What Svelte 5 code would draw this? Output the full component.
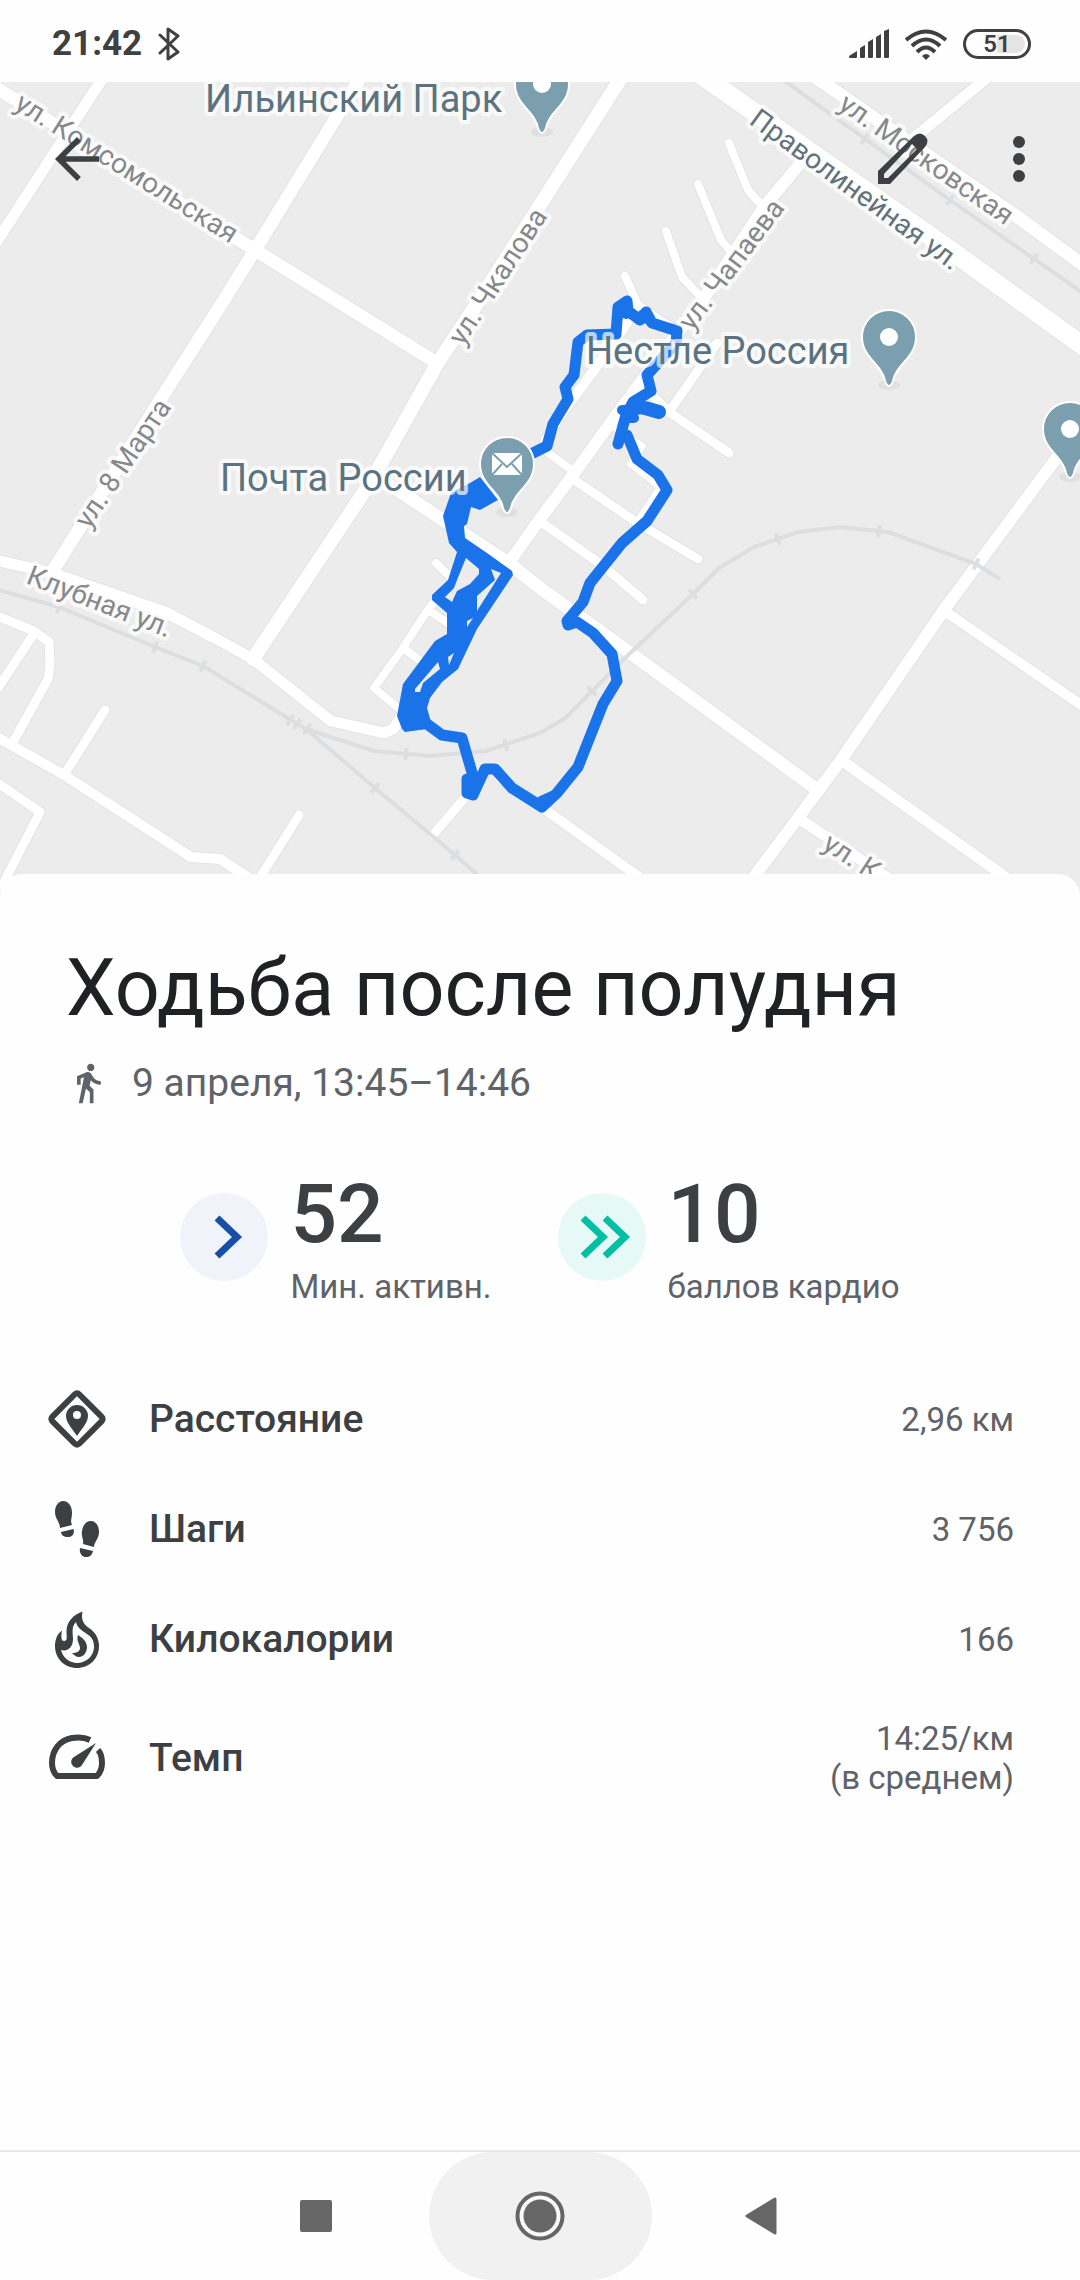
<script>
  const roads = [
    { w: 13, d: 'M-5 87 255 250 437 363' },
    { w: 11, d: 'M106 73 -6 246' },
    { w: 13, d: 'M364 72 255 250 224 300 162 397 52 572' },
    { w: 14, d: 'M625 72 540 205 482 296 437 364 372 480 253 659' },
    { w: 19, d: 'M697 72 805 148 953 252 1090 351' },
    { w: 13, d: 'M808 72 919 149 1012 213 1090 270' },
    { w: 11, d: 'M994 72 914 138' },
    { w: 12, d: 'M803 160 764 207 702 301 643 379 614 418 573 475 540 519 508 564' },
    { w: 8, d: 'M729 143 748 190 766 210' },
    { w: 8, d: 'M698 184 721 240 733 254' },
    { w: 8, d: 'M666 231 682 277 702 298' },
    { w: 8, d: 'M625 276 638 305 680 333' },
    { w: 10, d: 'M638 306 609 350 560 416 545 442' },
    { w: 8, d: 'M547 452 573 471' },
    { w: 9, d: 'M573 479 636 522 698 559' },
    { w: 9, d: 'M541 522 602 565 643 600' },
    { w: 9, d: 'M645 388 669 412 729 453' },
    { w: 9, d: 'M717 343 669 412' },
    { w: 6, d: 'M614 428 643 446 630 464 660 487 638 520' },
    { w: 13, d: 'M378 479 396 489 510 564 540 588 633 655 815 788' },
    { w: 8, d: 'M436 563 452 579' },
    { w: 8, d: 'M440 594 427 611 403 648 374 688 402 711' },
    { w: 8, d: 'M430 611 452 626' },
    { w: 8, d: 'M403 648 422 662' },
    { w: 11, d: 'M-5 560 52 573 165 612 213 637 253 659 293 691 331 721 384 733 393 729 405 712' },
    { w: 9, d: 'M-5 615 34 631 49 642 50 664 48 679 12 744' },
    { w: 9, d: 'M33 635 -6 694' },
    { w: 10, d: 'M-5 736 64 775 191 857 220 859 252 880' },
    { w: 9, d: 'M105 710 64 775' },
    { w: 9, d: 'M-5 781 40 812 2 886' },
    { w: 9, d: 'M299 815 255 886' },
    { w: 9, d: 'M468 794 433 835' },
    { w: 12, d: 'M1061 452 946 607 841 760 798 818 750 882' },
    { w: 10, d: 'M946 612 1090 711' },
    { w: 11, d: 'M841 760 1018 886' },
    { w: 11, d: 'M798 818 900 886' },
    { w: 10, d: 'M500 778 543 808 650 885' }
  ];

  const rails = [
    'M775 74 950 200 1090 298',
    'M-5 589 59 607 155 647 203 666 291 720 306 729 375 788 455 855 495 890',
    'M306 729 374 751 430 756 486 751 540 733 564 719 592 691 624 659 693 594 719 568 754 547 798 532 840 527 888 532 976 564 1000 579'
  ];

  const ties = [
    [865, 139, 36], [950, 200, 36], [1034, 259, 36], [59, 607, 20], [155, 647, 22], [203, 666, 25],
    [290, 720, 32], [297, 724, 32], [307, 729, 35], [375, 788, 40], [455, 855, 40], [406, 754, 5],
    [506, 745, -15], [592, 691, -44], [693, 594, -43], [778, 539, -20], [879, 531, 8], [976, 564, 25]
  ];

  const streets = [
    { x: 13, y: 108, r: 32, t: 'ул. Комсомольская' },
    { x: 463, y: 347, r: -57, t: 'ул. Чкалова' },
    { x: 692, y: 332, r: -53, t: 'ул. Чапаева' },
    { x: 89, y: 530, r: -56, t: 'ул. 8 Марта' },
    { x: 25, y: 583, r: 21, t: 'Клубная ул.' },
    { x: 748, y: 123, r: 36, t: 'Праволинейная ул.', major: true },
    { x: 837, y: 108, r: 35, t: 'ул. Московская' },
    { x: 821, y: 848, r: 33, t: 'ул. К' }
  ];

  const places = [
    { x: 205, y: 112, t: 'Ильинский Парк' },
    { x: 220, y: 491, t: 'Почта России' },
    { x: 586, y: 364, t: 'Нестле Россия' }
  ];

  const pins = [
    { x: 542, y: 84 },
    { x: 889, y: 337 },
    { x: 1070, y: 429 },
    { x: 507, y: 464, mail: true }
  ];

  const metrics = [
    { icon: 'distance', name: 'Расстояние', lines: ['2,96 км'] },
    { icon: 'steps', name: 'Шаги', lines: ['3 756'] },
    { icon: 'energy', name: 'Килокалории', lines: ['166'] },
    { icon: 'pace', name: 'Темп', lines: ['14:25/км', '(в среднем)'] }
  ];
</script>

<div class="screen">
  <header class="status">
    <div class="group left">
      <time>21:42</time>
      <svg width="22" height="36" viewBox="0 0 22 36" aria-label="Bluetooth">
        <path d="M2 9 20 26 10 33V3L20 10 2 27" fill="none" stroke="#404040" stroke-width="3" stroke-linejoin="round" stroke-linecap="round" />
      </svg>
    </div>
    <div class="group right">
      <svg width="40" height="30" viewBox="0 0 40 30" fill="#404040" aria-label="Сигнал">
        <path d="M0 27 8 22V28Q8 29 7 29H1Q0 29 0 27zM11 19l5-3v12q0 1-1 1h-3q-1 0-1-1zM19 13l5-3v18q0 1-1 1h-3q-1 0-1-1zM27 8l5-3v23q0 1-1 1h-3q-1 0-1-1zM35 2l5-2v28q0 1-1 1h-3q-1 0-1-1z" />
      </svg>
      <svg width="42" height="31" viewBox="0 0 42 31" fill="none" stroke="#404040" stroke-width="4" aria-label="Wi-Fi">
        <path d="M1 11Q21-6 41 11M7 17Q21 4 35 17M12 23Q21 14 30 23" />
        <path d="M21 31 17 27Q21 23 25 27z" fill="#404040" stroke="none" />
      </svg>
      <span class="battery">51</span>
    </div>
  </header>

  <section class="map">
    <svg class="canvas" viewBox="0 82 1080 814" role="img" aria-label="Маршрут на карте">
      <rect x="0" y="82" width="1080" height="814" fill="#ececec" />
      <g class="edges">
        {#each roads as road}<path d={road.d} stroke-width={road.w + 2} />{/each}
      </g>
      <g class="roads">
        {#each roads as road}<path d={road.d} stroke-width={road.w} />{/each}
      </g>
      <g class="rails">
        {#each rails as d}<path {d} />{/each}
        {#each ties as [x, y, r]}<path d="M0-6V6" transform="translate({x} {y}) rotate({r})" />{/each}
      </g>

      <g class="labels street">
        {#each streets as s}
          <text class:major={s.major} transform="translate({s.x} {s.y}) rotate({s.r})">{s.t}</text>
        {/each}
      </g>

      <g class="route">
        <path stroke-width="11" d="M507 468 533 453 547 446 553 424 568 399 565 387 574 375 578 342 587 335 616 334 618 307 627 301 628 311 640 320 646 312 652 323 677 331 676 343 647 375 651 391 633 402 626 415 618 444M627 435 637 459 658 475 667 490 647 521 622 543 590 583 583 602 567 621 568 625 577 622 593 633 612 654 617 681 603 704 578 767 557 793 542 807 512 788 495 769 485 769 473 795 467 793 467 779 475 783 462 738 442 735 427 724" />
        <path stroke-width="10" d="M640 408 660 413M622 410 650 409M626 418 634 418M620 309 626 314M642 315 647 319M541 801 552 796" />
        <path stroke-width="14" d="M630 411 640 406M645 408 659 412" />
        <path class="mass" fill-rule="evenodd" d="M458 489 470 483 480 477 498 500 489 505 480 510 471 507 467 524 464 526 465 538 487 553 512 571 513 575 477 629 458 669 442 682 430 698 427 708 431 722 427 729 405 732 402 729 397 716 403 684 435 641 447 634 447 613 432 600 432 595 448 580 457 552 449 543 443 516 451 493zM466 558 479 569 479 574 470 584 457 591 452 602 445 597 454 588 457 580zM491 569 501 573 477 611 477 596 495 580zM467 621 473 618 467 627zM448 657 454 653 449 665zM438 662 440 669 423 683 420 692 415 692 415 689z" />
      </g>

      <g class="labels place">
        {#each places as p}<text x={p.x} y={p.y}>{p.t}</text>{/each}
      </g>

      {#each pins as pin}
        <g transform="translate({pin.x} {pin.y})">
          <ellipse cx="0" cy="48" rx="11" ry="5" fill="#e0e0e0" />
          <path d="M0-27C-15-27-27-15-27 0-27 21-7 27-4 44Q0 54 4 44C7 27 27 21 27 0 27-15 15-27 0-27z" fill="#7b9faf" stroke="#fff" stroke-width="2" />
          {#if pin.mail}
            <rect x="-15" y="-11" width="30" height="22" fill="#fff" />
            <path d="M-15-11 0 3 15-11M-15 11-5 0M15 11 5 0" fill="none" stroke="#7b9faf" stroke-width="2" />
          {:else}
            <circle r="9" fill="#fff" />
          {/if}
        </g>
      {/each}
    </svg>

    <div class="toolbar">
      <button aria-label="Назад">
        <svg width="66" height="66" viewBox="0 0 24 24" fill="#3c4043"><path d="M20 11H7.830l5.590-5.590L12 4l-8 8 8 8 1.410-1.410L7.830 13H20v-2z" /></svg>
      </button>
      <span class="spacer"></span>
      <button aria-label="Изменить">
        <svg width="66" height="66" viewBox="0 0 66 66" fill="#3c4043">
          <path fill-rule="evenodd" d="M8 45 44 10Q50 5 55 10Q60 15 55 21L20 58H8zM14 48V52H18L47 23 42 18z" />
        </svg>
      </button>
      <button aria-label="Ещё">
        <svg width="66" height="66" viewBox="0 0 66 66" fill="#3c4043"><circle cx="33" cy="16" r="6" /><circle cx="33" cy="33" r="6" /><circle cx="33" cy="50" r="6" /></svg>
      </button>
    </div>
  </section>

  <main class="sheet">
    <h1>Ходьба после полудня</h1>
    <p class="when">
      <svg width="44" height="44" viewBox="0 0 24 24" fill="#5f6368" aria-hidden="true">
        <path d="M13.500 5.500c1.100 0 2-.9 2-2s-.9-2-2-2-2 .9-2 2 .9 2 2 2zM9.800 8.900L7 23h2.100l1.800-8 2.100 2v6h2v-7.500l-2.100-2 .6-3C14.800 12 16.800 13 19 13v-2c-1.900 0-3.500-1-4.300-2.400l-1-1.600c-.4-.6-1-1-1.700-1-.3 0-.5.1-.8.1L6 8.300V13h2V9.600l1.800-.7" />
      </svg>
      <span>9 апреля, 13:45–14:46</span>
    </p>

    <div class="stats">
      <div class="stat">
        <svg width="88" height="88" viewBox="0 0 88 88" aria-hidden="true">
          <circle cx="44" cy="44" r="44" fill="#f0f4fa" />
          <path d="M37 25 57 44 37 63" fill="none" stroke="#174ea6" stroke-width="7" />
        </svg>
        <div><strong>52</strong><span>Мин. активн.</span></div>
      </div>
      <div class="stat">
        <svg width="88" height="88" viewBox="0 0 88 88" aria-hidden="true">
          <circle cx="44" cy="44" r="44" fill="#e6f9f6" />
          <path d="M25 25 45 44 25 63M47 25 67 44 47 63" fill="none" stroke="#00bfa5" stroke-width="7" />
        </svg>
        <div><strong>10</strong><span>баллов кардио</span></div>
      </div>
    </div>

    <dl class="metrics">
      {#each metrics as m}
        <div class="row">
          <dt>
            <svg width="66" height="66" viewBox="0 0 66 66" fill="#3c4043" aria-hidden="true">
              {#if m.icon === 'distance'}
                <rect x="14" y="14" width="38" height="38" rx="3" fill="none" stroke="#3c4043" stroke-width="6" transform="rotate(45 33 33)" />
                <path fill-rule="evenodd" d="M33 50C30 45 22 37 22 30a11 11 0 0 1 22 0C44 37 36 45 33 50zM33 25a4 4 0 1 0 0 8a4 4 0 1 0 0-8z" />
              {:else if m.icon === 'steps'}
                <path d="M16 32C16 26 11 23 11 16 11 9 15 5 19 5 25 5 28 11 28 17 28 22 26 25 28 29zM17 36 29.500 33C31 38 28 41 24 41 20 41 17 39 17 36zM39 48C40 43 37 41 38 35 39 29 42 25 47 25 52 25 55 30 55 36 55 43 50 46 50 51zM36 52 49 55C48 59 46 61 42 61 38 61 35 57 36 52z" />
              {:else if m.icon === 'energy'}
                <path fill-rule="evenodd" d="M38.500 5.500C37 13 39 18 45 22 51 26 55 32 55 40 55 53 45 62 33 62 21 62 11 53 11 40 11 34 13 28 18 24.500 17 30 17 35 20 35 24 35 22.500 30 22.500 25 22.500 16 29 9 38.500 5.500zM32 16C27 21 29 27 29 33 29 41 24 46 17 44 19 52 26 57 33 57 42 57 50 50 50 41 50 35 48 31 43 28 37 24 33 21 32 16z" />
                <path d="M34 29C39 32 43 36 43 41 43 47 39 51 35 51 32 51 30 49 28 47 33 47 36 45 36 42 36 38 32 35 34 29z" />
              {:else}
                <path d="M46 15C40 12 34 12 28 13 16 15 8 25 8 38 8 43 10 48 13 51H53C56 48 58 43 58 38 58 33 57 28 54 25" fill="none" stroke="#3c4043" stroke-width="6" stroke-linejoin="round" />
                <path d="M52 18 38 40C36 43 32 44 29 41 26 38 27 34 30 32z" />
              {/if}
            </svg>
            {m.name}
          </dt>
          <dd>{#each m.lines as line}<span>{line}</span>{/each}</dd>
        </div>
      {/each}
    </dl>
  </main>

  <nav class="navbar">
    <button aria-label="Недавние"><svg width="50" height="50" viewBox="0 0 50 50" fill="#666"><rect x="8" y="9" width="32" height="32" rx="2" /></svg></button>
    <button class="pressed" aria-label="Домой">
      <svg width="50" height="50" viewBox="0 0 50 50"><circle cx="25" cy="25" r="22.500" fill="#f8f8f8" stroke="#666" stroke-width="4" /><circle cx="25" cy="25" r="16.500" fill="#666" /></svg>
    </button>
    <button aria-label="Назад"><svg width="50" height="50" viewBox="0 0 50 50" fill="#666" stroke="#666" stroke-width="3" stroke-linejoin="round"><path d="M9 25 37 8V42z" /></svg></button>
  </nav>
</div>

<style>
  :global(body) {
    margin: 0;
    background: #fefefe;
  }
  .screen {
    display: flex;
    flex-direction: column;
    min-height: 100vh;
    font-family: Roboto, 'Noto Sans', sans-serif;
    color: #3c4043;
    background: #fefefe;
  }
  svg {
    display: block;
    flex-shrink: 0;
  }
  button {
    display: flex;
    align-items: center;
    justify-content: center;
    padding: 0;
    border: 0;
    background: none;
  }
  .status {
    display: flex;
    justify-content: space-between;
    align-items: center;
    height: 82px;
    padding: 6px 49px 0 52px;
    box-sizing: border-box;
    color: #404040;
  }
  .group {
    display: flex;
    align-items: center;
    gap: 16px;
  }
  time {
    font-size: 35px;
    line-height: 44px;
    font-weight: 700;
  }
  .battery {
    box-sizing: border-box;
    width: 68px;
    height: 30px;
    border: 3px solid #404040;
    border-radius: 15px;
    padding: 3px;
    font-size: 24px;
    line-height: 18px;
    font-weight: 600;
    text-align: center;
    background: linear-gradient(90deg, #fefefe 50%, #e4e4e4 50%) content-box;
  }
  .map {
    position: relative;
    overflow: hidden;
  }
  .canvas {
    width: 100%;
    height: auto;
  }
  .edges path,
  .roads path,
  .rails path,
  .route path {
    fill: none;
    stroke-linejoin: round;
  }
  .edges path {
    stroke: #e2e3e5;
    stroke-linecap: round;
  }
  .roads path {
    stroke: #fff;
    stroke-linecap: round;
  }
  .rails path {
    stroke: #dcdee0;
    stroke-width: 4;
  }
  .route path {
    stroke: #1a73e8;
    stroke-linecap: round;
  }
  .route .mass {
    fill: #1a73e8;
    stroke: none;
  }
  .labels text {
    paint-order: stroke;
    stroke: #fff;
    stroke-opacity: 0.7;
    stroke-width: 8;
    stroke-linejoin: round;
  }
  .street text {
    font-size: 28px;
    fill: #85898c;
  }
  .street .major {
    fill: #64727a;
  }
  .place text {
    font-size: 38px;
    fill: #5b7380;
  }
  .toolbar {
    position: absolute;
    top: 44px;
    left: 44px;
    right: 28px;
    display: flex;
  }
  .toolbar button + button {
    margin-left: 50px;
  }
  .spacer {
    flex: 1;
  }
  .sheet {
    position: relative;
    flex: 1;
    margin-top: -22px;
    padding: 68px 66px 0;
    border-radius: 22px 22px 0 0;
    background: #fefefe;
  }
  h1 {
    margin: 0;
    font-size: 79px;
    line-height: 92px;
    font-weight: 400;
    color: #202124;
  }
  .when {
    display: flex;
    align-items: center;
    gap: 22px;
    margin: 26px 0 0;
    font-size: 39px;
    line-height: 46px;
    color: #5f6368;
  }
  .stats {
    display: flex;
    justify-content: center;
    gap: 66px;
    margin-top: 58px;
  }
  .stat {
    display: flex;
    align-items: center;
    gap: 22px;
  }
  .stat div {
    display: flex;
    flex-direction: column;
  }
  .stat strong {
    font-size: 82px;
    line-height: 100px;
    font-weight: 500;
  }
  .stat span {
    font-size: 33px;
    line-height: 46px;
    color: #5f6368;
  }
  .metrics {
    margin: 54px 0 0 -22px;
  }
  .row {
    display: flex;
    justify-content: space-between;
    align-items: center;
    min-height: 110px;
    box-sizing: border-box;
    padding: 25px 0;
  }
  dt {
    display: flex;
    align-items: center;
    gap: 39px;
    height: 60px;
    font-size: 39px;
    font-weight: 500;
  }
  dd {
    display: flex;
    flex-direction: column;
    align-items: flex-end;
    margin: 0;
    font-size: 33px;
    line-height: 39px;
    color: #5f6368;
  }
  .navbar {
    display: flex;
    justify-content: center;
    border-top: 2px solid #e8e8e8;
  }
  .navbar button {
    width: 223px;
    height: 128px;
    border-radius: 64px;
  }
  .pressed {
    background: #f1f1f1;
  }
</style>
